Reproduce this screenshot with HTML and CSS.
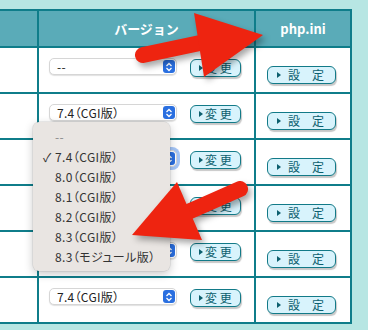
FILE: index.html
```html
<!DOCTYPE html>
<html lang="ja">
<head>
    <meta charset="UTF-8">
    <meta name="viewport" content="width=device-width, initial-scale=1.0">
    <title>PHPバージョン設定</title>
    <link rel="stylesheet" href="styles.css">
</head>
<body>
    <div class="page">
        <table class="grid">
            <thead>
                <tr>
                    <th class="c0"></th>
                    <th class="c1">バージョン</th>
                    <th class="c2">php.ini</th>
                </tr>
            </thead>
            <tbody>
                <tr>
                    <td class="c0"></td>
                    <td class="c1">
                        <div class="cell">
                            <div class="sel"><span class="val">--</span><span class="step"><svg width="8" height="10" viewBox="0 0 8 10"><path d="M1.5 4 L4 1.5 L6.5 4 M1.5 6 L4 8.5 L6.5 6" fill="none" stroke="#fff" stroke-width="1.3"/></svg></span></div>
                            <span class="btn short"><i class="tri"></i>変 更</span>
                        </div>
                    </td>
                    <td class="c2"><span class="btn wide"><i class="tri"></i>設　定</span></td>
                </tr>
                <tr>
                    <td class="c0"></td>
                    <td class="c1">
                        <div class="cell">
                            <div class="sel"><span class="val">7.4（CGI版）</span><span class="step"><svg width="8" height="10" viewBox="0 0 8 10"><path d="M1.5 4 L4 1.5 L6.5 4 M1.5 6 L4 8.5 L6.5 6" fill="none" stroke="#fff" stroke-width="1.3"/></svg></span></div>
                            <span class="btn short"><i class="tri"></i>変 更</span>
                        </div>
                    </td>
                    <td class="c2"><span class="btn wide"><i class="tri"></i>設　定</span></td>
                </tr>
                <tr>
                    <td class="c0"></td>
                    <td class="c1">
                        <div class="cell">
                            <div class="sel focus"><span class="val">7.4（CGI版）</span><span class="step"><svg width="8" height="10" viewBox="0 0 8 10"><path d="M1.5 4 L4 1.5 L6.5 4 M1.5 6 L4 8.5 L6.5 6" fill="none" stroke="#fff" stroke-width="1.3"/></svg></span></div>
                            <span class="btn short"><i class="tri"></i>変 更</span>
                        </div>
                    </td>
                    <td class="c2"><span class="btn wide"><i class="tri"></i>設　定</span></td>
                </tr>
                <tr>
                    <td class="c0"></td>
                    <td class="c1">
                        <div class="cell">
                            <div class="sel"><span class="val">7.4（CGI版）</span><span class="step"><svg width="8" height="10" viewBox="0 0 8 10"><path d="M1.5 4 L4 1.5 L6.5 4 M1.5 6 L4 8.5 L6.5 6" fill="none" stroke="#fff" stroke-width="1.3"/></svg></span></div>
                            <span class="btn short"><i class="tri"></i>変 更</span>
                        </div>
                    </td>
                    <td class="c2"><span class="btn wide"><i class="tri"></i>設　定</span></td>
                </tr>
                <tr>
                    <td class="c0"></td>
                    <td class="c1">
                        <div class="cell">
                            <div class="sel"><span class="val">7.4（CGI版）</span><span class="step"><svg width="8" height="10" viewBox="0 0 8 10"><path d="M1.5 4 L4 1.5 L6.5 4 M1.5 6 L4 8.5 L6.5 6" fill="none" stroke="#fff" stroke-width="1.3"/></svg></span></div>
                            <span class="btn short"><i class="tri"></i>変 更</span>
                        </div>
                    </td>
                    <td class="c2"><span class="btn wide"><i class="tri"></i>設　定</span></td>
                </tr>
                <tr>
                    <td class="c0"></td>
                    <td class="c1">
                        <div class="cell">
                            <div class="sel"><span class="val">7.4（CGI版）</span><span class="step"><svg width="8" height="10" viewBox="0 0 8 10"><path d="M1.5 4 L4 1.5 L6.5 4 M1.5 6 L4 8.5 L6.5 6" fill="none" stroke="#fff" stroke-width="1.3"/></svg></span></div>
                            <span class="btn short"><i class="tri"></i>変 更</span>
                        </div>
                    </td>
                    <td class="c2"><span class="btn wide"><i class="tri"></i>設　定</span></td>
                </tr>
            </tbody>
        </table>

        <!-- open dropdown of the third row -->
        <ul class="menu">
            <li class="dim">--</li>
            <li class="checked">7.4（CGI版）</li>
            <li>8.0（CGI版）</li>
            <li>8.1（CGI版）</li>
            <li>8.2（CGI版）</li>
            <li>8.3（CGI版）</li>
            <li>8.3（モジュール版）</li>
        </ul>

        <!-- annotation arrows -->
        <svg class="marks" width="368" height="330" viewBox="0 0 368 330">
            <g class="arrow">
                <line x1="143" y1="55" x2="200" y2="43" stroke="#ee2410" stroke-width="16" stroke-linecap="round"/>
                <polygon points="194,13 263,35 204,77" fill="#ee2410"/>
            </g>
            <g class="arrow">
                <line x1="240" y1="189" x2="188" y2="212" stroke="#ee2410" stroke-width="16" stroke-linecap="round"/>
                <polygon points="177,182 132,235 202,240" fill="#ee2410"/>
            </g>
        </svg>
    </div>
</body>
</html>
```

FILE: styles.css
```css
body {
    margin: 0;
    background-color: #b7e6e3;
    font-family: "Noto Sans CJK JP", "Noto Sans", sans-serif;
}

.page {
    position: relative;
    width: 368px;
    height: 330px;
    overflow: hidden;
    padding-top: 9px;
    box-sizing: border-box;
}

.grid {
    border-collapse: separate;
    border-spacing: 0;
    table-layout: fixed;
    width: 352px;
    border-top: 2px solid #0f7d8a;
}

.grid th,
.grid td {
    box-sizing: border-box;
    border-right: 2px solid #0f7d8a;
    border-bottom: 2px solid #0f7d8a;
    padding: 0;
}

.grid th {
    height: 37px;
    background-color: #5aabb8;
    color: #fff;
    font-size: 13px;
    font-weight: bold;
    text-align: center;
}

.grid td {
    height: 46px;
    background-color: #fff;
    vertical-align: top;
    padding-top: 10px;
}

.c0 { width: 39px; }
.c1 { width: 217px; }
.c2 { width: 96px; }

.grid td.c1 {
    padding-left: 10px;
}

.grid td.c2 {
    padding-left: 11px;
    padding-top: 11px;
}

.cell {
    display: flex;
    align-items: flex-start;
    gap: 13px;
}

.sel {
    display: flex;
    align-items: center;
    width: 128px;
    height: 17px;
    box-sizing: border-box;
    border: 1px solid #d6d6d6;
    border-radius: 5px;
    background-color: #fff;
    box-shadow: 0 1px 1px rgba(0, 0, 0, 0.12);
    padding-left: 7px;
    padding-right: 1px;
    font-size: 12px;
    color: #222;
    font-feature-settings: "palt";
}

.sel .val {
    flex: 1;
    line-height: 15px;
    letter-spacing: 0.3px;
}

.step {
    display: flex;
    align-items: center;
    justify-content: center;
    width: 12px;
    height: 13px;
    border-radius: 3px;
    background-color: #2a6fe0;
}

.sel.focus {
    box-shadow: 0 0 0 3px rgba(90, 150, 240, 0.55);
}

.btn {
    display: inline-flex;
    align-items: center;
    height: 18px;
    box-sizing: border-box;
    margin-top: 1px;
    border: 1.5px solid #127a88;
    border-radius: 6px;
    background-color: #d8f3fc;
    box-shadow: 1px 2px 1px rgba(0, 0, 0, 0.22);
    color: #0c5f6e;
    font-size: 12px;
    line-height: 1;
    white-space: nowrap;
}

.btn.short {
    width: 51px;
    padding-left: 8px;
}

.btn.wide {
    width: 69px;
    padding-left: 9px;
    margin-top: 0;
}

.tri {
    display: inline-block;
    width: 0;
    height: 0;
    border-top: 3px solid transparent;
    border-bottom: 3px solid transparent;
    border-left: 4px solid #0c5f6e;
    margin-right: 2px;
}

.btn.wide .tri {
    margin-right: 7px;
}

.menu {
    position: absolute;
    left: 33px;
    top: 122px;
    width: 137px;
    margin: 0;
    padding: 5px 0 4px;
    list-style: none;
    background-color: #e9e5e2;
    border-radius: 6px;
    box-shadow: 0 3px 10px rgba(0, 0, 0, 0.22), 0 0 0 0.5px rgba(0, 0, 0, 0.12);
    font-size: 12px;
    color: #333;
    font-feature-settings: "palt";
}

.menu li {
    height: 20px;
    line-height: 20px;
    padding-left: 22px;
    letter-spacing: 0.4px;
    position: relative;
}

.menu li.dim {
    color: #8a8a8a;
}

.menu li.checked::before {
    content: "✓";
    position: absolute;
    left: 10px;
    font-size: 12px;
}

.marks {
    position: absolute;
    left: 0;
    top: 0;
    pointer-events: none;
}

.arrow {
    filter: drop-shadow(3px 4px 3px rgba(0, 0, 0, 0.35));
}
```
